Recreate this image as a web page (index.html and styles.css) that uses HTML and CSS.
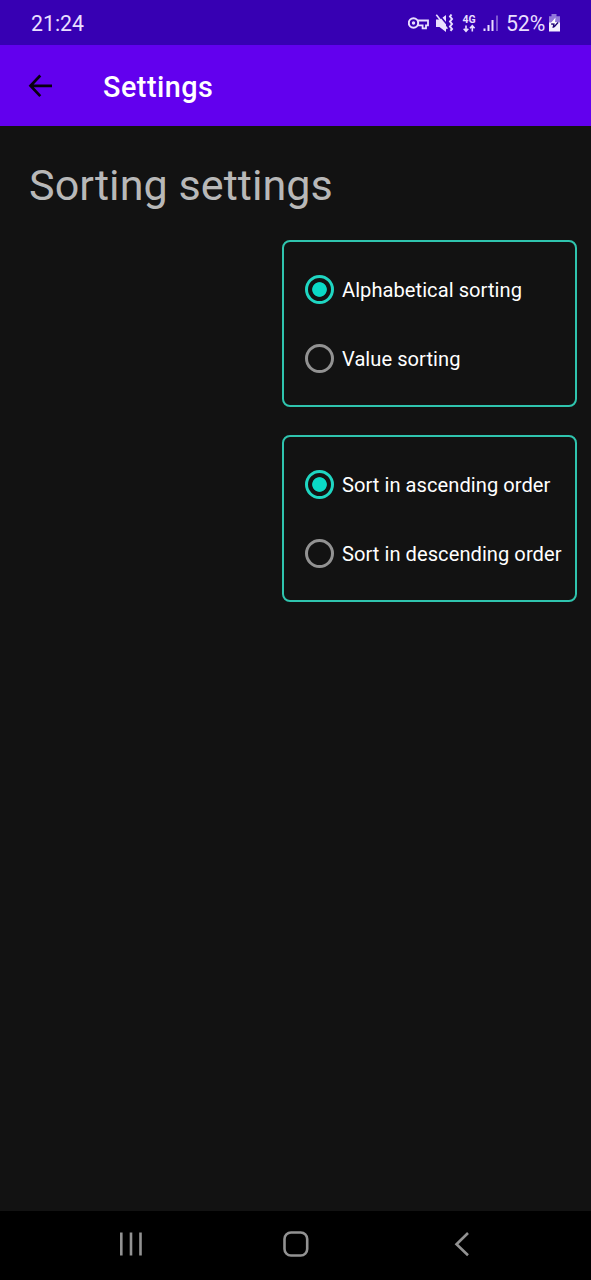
FILE: index.html
```html
<!DOCTYPE html>
<html lang="en">
<head>
<meta charset="utf-8">
<title>Settings</title>
<link rel="stylesheet" href="styles.css">
</head>
<body>
<div class="status-bar">
  <span class="clock">21:24</span>
  <svg class="status-icons" width="92" height="24" viewBox="408 12 92 24" fill="none" stroke="#e9dfff">
    <g stroke-width="2">
      <circle cx="413.500" cy="23" r="4.700"/>
      <path d="M418 20.500h10v4.800h-2v3h-3.400v-3h-4.600" stroke-width="1.800"/>
    </g>
    <circle cx="413.500" cy="23" r="1.700" fill="#e9dfff" stroke="none"/>
    <path d="M436 19.500h4l6-4.500v17l-6.500-5H436z" fill="#e9dfff" stroke="none"/>
    <path d="M438 13.500l10 12" stroke="#3700b3" stroke-width="1.600"/>
    <path d="M436.300 14.800l11 14" stroke-width="1.600"/>
    <path d="M451.500 14.500l-1.500 2 2 2.500-2 2.500 2 2.500-2 2.500 2 2.500-1.500 1.800" stroke-width="2"/>
    <path d="M466 25.500v5.500m-2.300-2.300l2.300 2.500 2.300-2.500M472.300 31.500v-5.500m-2.300 2.300l2.300-2.500 2.300 2.500" stroke-width="1.600"/>
    <text class="network" x="462.500" y="22.500">4G</text>
    <path d="M484.500 28.500v2.500M488.500 25v6M492.500 20v11" stroke-width="2"/>
    <path d="M497 15.500v15.500" stroke-width="2" opacity=".4"/>
  </svg>
  <span class="battery-level">52%</span>
  <svg class="battery" width="12" height="18" viewBox="0 0 12 18">
    <path d="M3.500 0h5v2.200H12V9H1V2.200h2.500z" fill="#9276db"/>
    <path d="M1 8.500h11v9H1z" fill="#f4f0ff"/>
    <path d="M7.500 3.500L2.500 9.500h3.200l-1 4L10 8.300H7z" fill="#fff"/>
    <path d="M5 13.800l1-3.600-2.800-.2M6 13l4-4.500" fill="none" stroke="#1d0075" stroke-width="1.300"/>
  </svg>
</div>
<header class="app-bar">
  <svg class="back" width="24" height="24" viewBox="0 0 24 24" fill="none" stroke="#08000f" stroke-width="2.700"><path d="M24 11.800H3M12.300 1.500L2.500 11.800l9.800 10.300"/></svg>
  <h1 class="title">Settings</h1>
</header>
<main class="content">
  <h2 class="heading">Sorting settings</h2>
  <div class="group">
    <label class="option"><span class="radio checked"></span><span class="label">Alphabetical sorting</span></label>
    <label class="option"><span class="radio"></span><span class="label">Value sorting</span></label>
  </div>
  <div class="group">
    <label class="option"><span class="radio checked"></span><span class="label">Sort in ascending order</span></label>
    <label class="option"><span class="radio"></span><span class="label">Sort in descending order</span></label>
  </div>
</main>
<nav class="nav-bar">
  <svg width="24" height="26" viewBox="0 0 24 26" stroke="#929292" stroke-width="2.600"><path d="M2.300 1.500v23M12 1.500v23M21.500 1.500v23"/></svg>
  <svg class="home" width="26" height="26" viewBox="0 0 26 26" fill="none" stroke="#929292" stroke-width="2.600"><rect x="1.500" y="1.500" width="22.700" height="23" rx="6.500"/></svg>
  <svg width="16" height="26" viewBox="0 0 16 26" fill="none" stroke="#929292" stroke-width="2.600"><path d="M14 2L2.500 13.200 14 24.300"/></svg>
</nav>
</body>
</html>
```
FILE: styles.css
```css
* { box-sizing: border-box; }
body {
  margin: 0;
  height: 1280px;
  display: flex;
  flex-direction: column;
  background: #121212;
  color: #fff;
  font-family: Roboto, "Liberation Sans", sans-serif;
  overflow: hidden;
}
svg { display: block; flex: none; }
.status-bar {
  height: 45px;
  flex: none;
  display: flex;
  align-items: flex-start;
  padding: 12px 30px 0 31px;
  background: #3700b3;
  color: #e9dfff;
  font-size: 21.300px;
  line-height: 24px;
}
.clock { width: 377px; }
.status-icons { margin-right: 6px; }
.network { font: 700 10.500px Roboto, sans-serif; fill: #e9dfff; stroke: none; }
.battery-level { width: 42px; letter-spacing: -.1px; }
.battery { margin-top: 2px; }
.app-bar {
  height: 81px;
  flex: none;
  display: flex;
  align-items: center;
  padding: 0 28px;
  background: #6200ee;
}
.title {
  margin: 3px 0 0 51px;
  font-size: 28.750px;
  font-weight: 500;
  line-height: 34px;
  letter-spacing: .5px;
}
.content {
  flex: 1;
  display: flex;
  flex-direction: column;
  align-items: flex-end;
  padding: 35px 14px 0 29px;
}
.heading {
  align-self: flex-start;
  margin: 0 0 29px;
  color: #b8b8b8;
  font-size: 43.100px;
  font-weight: 400;
  line-height: 50px;
  letter-spacing: .05px;
}
.group {
  width: 295px;
  height: 167px;
  margin-bottom: 28px;
  padding: 13px 0 0 20.500px;
  border: 2px solid #2fc4ae;
  border-radius: 8px;
}
.option { height: 69px; display: flex; align-items: center; }
.radio {
  width: 29px;
  height: 29px;
  flex: none;
  margin-right: 8.500px;
  border: 3px solid #929292;
  border-radius: 50%;
}
.checked {
  border-color: #1fd6c2;
  background: radial-gradient(circle, #0adac6 6.900px, transparent 7.700px);
}
.label {
  padding-top: 1px;
  font-size: 20.100px;
  line-height: 24px;
  letter-spacing: .05px;
  white-space: nowrap;
}
.nav-bar {
  height: 69px;
  flex: none;
  display: flex;
  justify-content: space-between;
  align-items: center;
  padding: 0 121px 3px 119px;
  background: #000;
}
.home { margin-right: 5px; }
```
